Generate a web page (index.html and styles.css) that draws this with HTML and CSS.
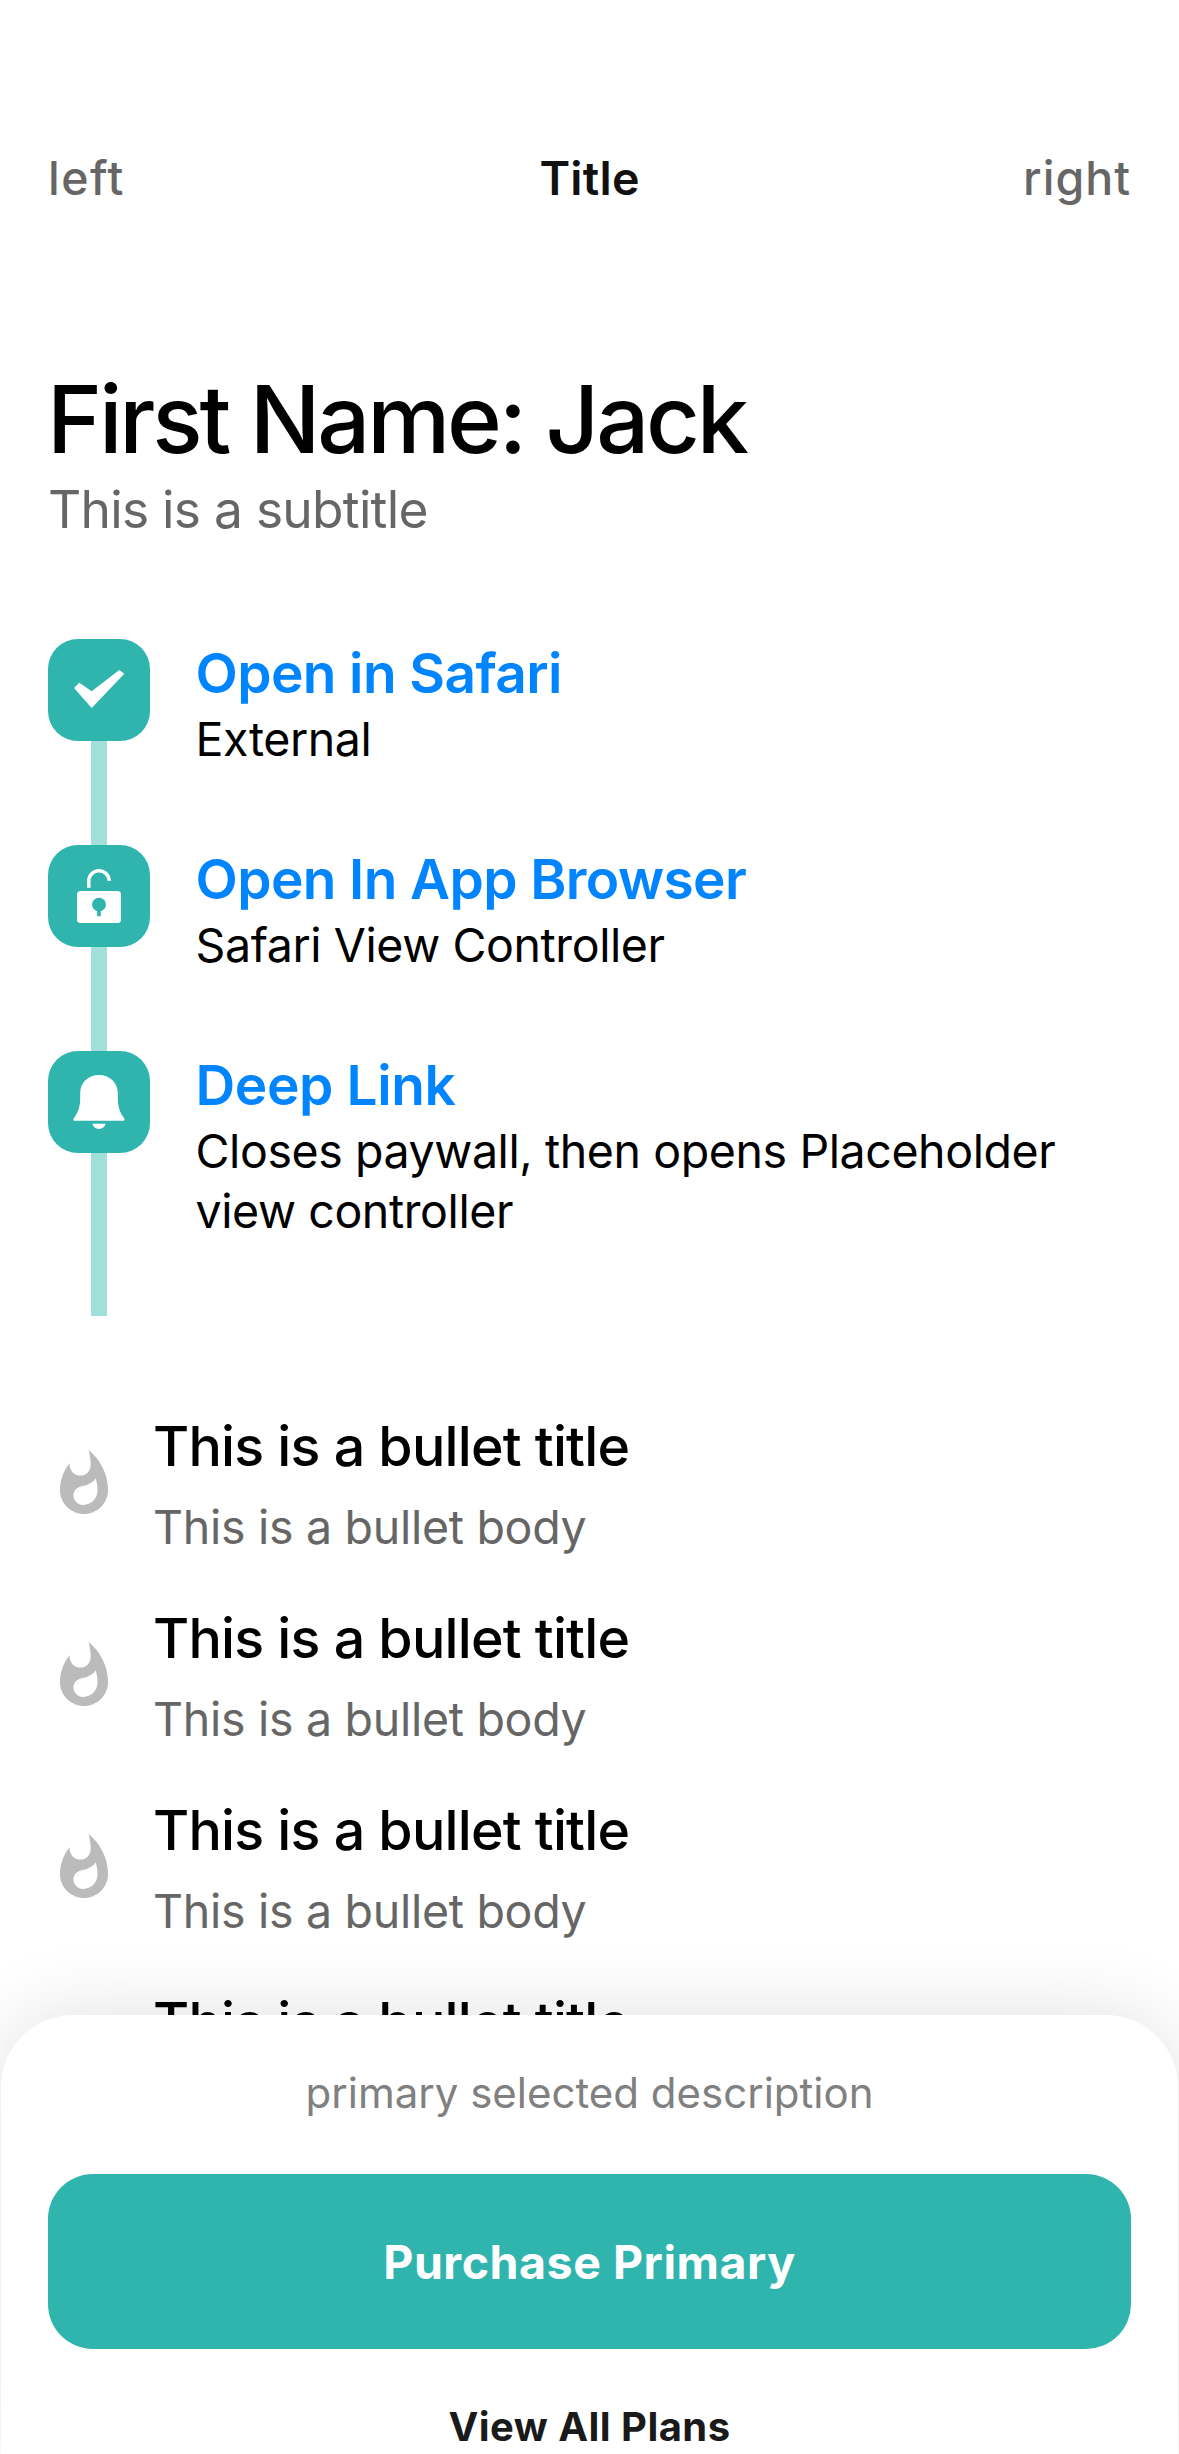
FILE: index.html
```html
<!DOCTYPE html>
<html lang="en">
<head>
<meta charset="utf-8">
<title>Title</title>
<link rel="stylesheet" href="styles.css">
</head>
<body>
<svg class="defs" width="0" height="0" aria-hidden="true">
  <symbol id="flame" viewBox="0 0 24 24">
    <path d="M13.5.67s.74 2.65.74 4.8c0 2.06-1.35 3.73-3.41 3.73-2.07 0-3.63-1.67-3.63-3.73l.03-.36C5.21 7.51 4 10.62 4 14c0 4.42 3.58 8 8 8s8-3.58 8-8C20 8.61 17.41 3.8 13.5.67zM11.71 19c-1.78 0-3.22-1.4-3.22-3.14 0-1.62 1.05-2.76 2.81-3.12 1.77-.36 3.6-1.21 4.62-2.58.39 1.29.59 2.65.59 4.04 0 2.65-2.15 4.8-4.8 4.8z"/>
  </symbol>
</svg>
<div class="screen">
  <header class="nav">
    <span class="nav-side">left</span>
    <span class="nav-title">Title</span>
    <span class="nav-side nav-right">right</span>
  </header>

  <main class="content">
    <h1 class="heading">First Name: Jack</h1>
    <p class="subtitle">This is a subtitle</p>

    <ol class="timeline">
      <li class="step">
        <div class="rail">
          <svg class="tile" viewBox="0 0 102 102"><path class="mark" d="M26 49L31.3 43.8L43.7 52.3L71.3 31L76.3 34.7L43.7 69Z"/></svg>
        </div>
        <div class="step-text">
          <a class="step-title">Open in Safari</a>
          <p class="step-body">External</p>
        </div>
      </li>
      <li class="step">
        <div class="rail">
          <svg class="tile" viewBox="0 0 102 102">
            <path class="shackle" d="M40.8 42.8V36a10.2 10.2 0 0 1 20.4 0"/>
            <path class="mark" fill-rule="evenodd" d="M32.5 46h37a3.5 3.5 0 0 1 3.5 3.5v25a3.5 3.5 0 0 1-3.5 3.5h-37a3.5 3.5 0 0 1-3.5-3.5v-25a3.5 3.5 0 0 1 3.5-3.5zM49.2 66.2v5h3.6v-5a6.9 6.9 0 1 0-3.6 0z"/>
          </svg>
        </div>
        <div class="step-text">
          <a class="step-title">Open In App Browser</a>
          <p class="step-body">Safari View Controller</p>
        </div>
      </li>
      <li class="step step-last">
        <div class="rail">
          <svg class="tile" viewBox="0 0 102 102">
            <path class="mark" d="M51 24C61.5 24 69.8 31.5 69.8 42V47C69.8 55 71.5 61 76 67Q77.500 69.700 75.500 69.700H26.500Q24.500 69.700 26 67C30.500 61 32.200 55 32.200 47V42C32.200 31.500 40.500 24 51 24ZM44.300 72.800H57.700C56.500 76 54.500 78 51 78S45.500 76 44.300 72.800Z"/>
          </svg>
        </div>
        <div class="step-text">
          <a class="step-title">Deep Link</a>
          <p class="step-body">Closes paywall, then opens Placeholder view controller</p>
        </div>
      </li>
    </ol>

    <ul class="bullets">
      <li class="bullet">
        <svg class="flame"><use href="#flame"/></svg>
        <div><h2 class="bullet-title">This is a bullet title</h2><p class="bullet-body">This is a bullet body</p></div>
      </li>
      <li class="bullet">
        <svg class="flame"><use href="#flame"/></svg>
        <div><h2 class="bullet-title">This is a bullet title</h2><p class="bullet-body">This is a bullet body</p></div>
      </li>
      <li class="bullet">
        <svg class="flame"><use href="#flame"/></svg>
        <div><h2 class="bullet-title">This is a bullet title</h2><p class="bullet-body">This is a bullet body</p></div>
      </li>
      <li class="bullet">
        <svg class="flame"><use href="#flame"/></svg>
        <div><h2 class="bullet-title">This is a bullet title</h2><p class="bullet-body">&nbsp;</p></div>
      </li>
    </ul>
  </main>

  <section class="sheet">
    <p class="sheet-note">primary selected description</p>
    <button class="purchase">Purchase Primary</button>
    <a class="plans">View All Plans</a>
  </section>
</div>
</body>
</html>
```
FILE: styles.css
```css
* {
  box-sizing: border-box;
  margin: 0;
  padding: 0;
}

body {
  background: #fff;
  color: #000;
  font-family: Inter, "Liberation Sans", sans-serif;
}

.defs {
  display: block;
}

.screen {
  position: relative;
  width: 1179px;
  height: 2454px;
  padding: 148px 48px 0;
  overflow: hidden;
}

/* Navigation */
.nav {
  display: grid;
  grid-template-columns: 1fr auto 1fr;
  font-size: 46.5px;
  line-height: 60px;
}

.nav-side {
  color: #666;
  font-weight: 500;
  letter-spacing: 1.5px;
}

.nav-right {
  text-align: right;
  letter-spacing: 1px;
}

.nav-title {
  color: #111;
  font-weight: 600;
  letter-spacing: 0.24px;
}

/* Heading */
.heading {
  margin: 156px 0 0 -1px;
  font-size: 93.5px;
  font-weight: 500;
  line-height: 110px;
  letter-spacing: -3.2px;
}

.subtitle {
  margin-top: 3px;
  color: #666;
  font-size: 51.5px;
  line-height: 64px;
  letter-spacing: -0.75px;
}

/* Timeline */
.timeline {
  margin-top: 98px;
  list-style: none;
}

.step {
  display: flex;
  gap: 45.5px;
}

.rail {
  display: flex;
  flex: none;
  justify-content: center;
  width: 102px;
  background: linear-gradient(#a1dfd9, #a1dfd9) 43px 0 / 16px 100% no-repeat;
}

.tile {
  width: 102px;
  height: 102px;
  background: #2fb5ae;
  border-radius: 30px;
}

.mark {
  fill: #fff;
}

.shackle {
  fill: none;
  stroke: #fff;
  stroke-width: 3.5;
}

.step-text {
  padding-bottom: 76px;
}

.step-last .step-text {
  padding-bottom: 75px;
}

.step-title {
  display: block;
  color: #0084ff;
  font-size: 55px;
  font-weight: 600;
  line-height: 68px;
  letter-spacing: -0.6px;
}

.step-last .step-title {
  letter-spacing: -0.4px;
}

.step-body {
  margin-top: 2px;
  font-size: 46.5px;
  line-height: 60px;
  letter-spacing: -0.41px;
}

/* Bullets */
.bullets {
  display: flex;
  flex-direction: column;
  gap: 47px;
  margin-top: 96px;
  list-style: none;
}

.bullet {
  display: flex;
  align-items: center;
  gap: 33px;
}

.flame {
  flex: none;
  width: 72px;
  height: 72px;
  margin-bottom: 1px;
  fill: #bbb;
}

.bullet-title {
  font-size: 55.5px;
  font-weight: 500;
  line-height: 68px;
  letter-spacing: -0.79px;
}

.bullet-body {
  margin-top: 17px;
  color: #666;
  font-size: 46.5px;
  line-height: 60px;
  letter-spacing: -0.29px;
}

/* Purchase sheet, overlapping the scrolled list */
.sheet {
  position: absolute;
  top: 2015px;
  right: 1px;
  bottom: 0;
  left: 1px;
  display: flex;
  flex-direction: column;
  align-items: center;
  padding: 51px 47px 0;
  background: #fff;
  border-radius: 72px 72px 0 0;
  box-shadow: 0 0 80px rgba(0, 0, 0, 0.12);
}

.sheet-note {
  color: #808080;
  font-size: 42px;
  line-height: 54px;
}

.purchase {
  align-self: stretch;
  height: 175px;
  margin-top: 54px;
  border: 0;
  border-radius: 45px;
  background: #2fb5ae;
  color: #fff;
  font: 700 46.5px Inter, "Liberation Sans", sans-serif;
  letter-spacing: 0.53px;
}

.plans {
  margin-top: 53px;
  color: #1a1a1a;
  font-size: 40px;
  font-weight: 700;
  line-height: 50px;
  letter-spacing: 0.46px;
}
```
